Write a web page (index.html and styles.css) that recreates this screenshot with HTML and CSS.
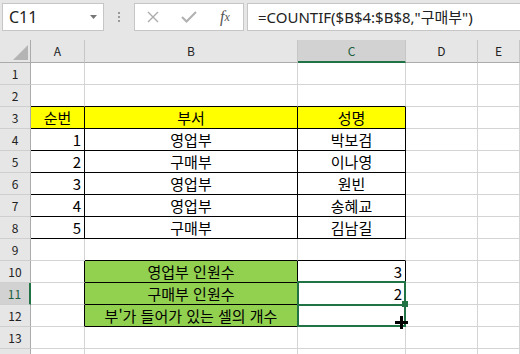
FILE: index.html
```html
<!DOCTYPE html>
<html lang="ko">
<head>
  <meta charset="UTF-8">
  <title>COUNTIF</title>
  <link rel="stylesheet" href="styles.css">
</head>
<body>
<div class="toolbar">
  <div class="namebox">
    <span>C11</span>
    <svg class="caret" width="7" height="4" viewBox="0 0 7 4"><path d="M0 0h7L3.5 4z" fill="#767676"/></svg>
  </div>
  <div class="grip"><i></i><i></i><i></i></div>
  <div class="fxbox">
    <span class="tool">
      <svg width="12" height="12" viewBox="0 0 12 12"><path d="M1 1l10 10M11 1L1 11" stroke="#ababab" stroke-width="1.4" fill="none"/></svg>
    </span>
    <span class="tool">
      <svg width="16" height="12" viewBox="0 0 16 12"><path d="M1 6l4.5 4.5L15 1" stroke="#b0b0b0" stroke-width="2" fill="none"/></svg>
    </span>
    <span class="tool fx">f<small>x</small></span>
  </div>
  <div class="formula">=COUNTIF($B$4:$B$8,"구매부")</div>
</div>

<div class="sheet">
  <!-- column headers -->
  <div class="hd corner"><svg width="15" height="15" viewBox="0 0 15 15"><path d="M15 0v15H0z" fill="#b4b4b4"/></svg></div>
  <div class="hd">A</div>
  <div class="hd">B</div>
  <div class="hd on">C</div>
  <div class="hd">D</div>
  <div class="hd">E</div>

  <div class="rn">1</div><div class="c"></div><div class="c"></div><div class="c"></div><div class="c"></div><div class="c"></div>
  <div class="rn">2</div><div class="c bb"></div><div class="c bb"></div><div class="c bb"></div><div class="c"></div><div class="c"></div>

  <div class="rn">3</div>
  <div class="c bb br yl ctr">순번</div>
  <div class="c bb br yl ctr">부서</div>
  <div class="c bb br yl ctr">성명</div>
  <div class="c"></div><div class="c"></div>

  <div class="rn">4</div>
  <div class="c bb br num">1</div>
  <div class="c bb br ctr">영업부</div>
  <div class="c bb br ctr">박보검</div>
  <div class="c"></div><div class="c"></div>

  <div class="rn">5</div>
  <div class="c bb br num">2</div>
  <div class="c bb br ctr">구매부</div>
  <div class="c bb br ctr">이나영</div>
  <div class="c"></div><div class="c"></div>

  <div class="rn">6</div>
  <div class="c bb br num">3</div>
  <div class="c bb br ctr">영업부</div>
  <div class="c bb br ctr">원빈</div>
  <div class="c"></div><div class="c"></div>

  <div class="rn">7</div>
  <div class="c bb br num">4</div>
  <div class="c bb br ctr">영업부</div>
  <div class="c bb br ctr">송혜교</div>
  <div class="c"></div><div class="c"></div>

  <div class="rn">8</div>
  <div class="c bb br num">5</div>
  <div class="c bb br ctr">구매부</div>
  <div class="c bb br ctr">김남길</div>
  <div class="c"></div><div class="c"></div>

  <div class="rn">9</div><div class="c"></div><div class="c bb"></div><div class="c bb"></div><div class="c"></div><div class="c"></div>

  <div class="rn">10</div>
  <div class="c br"></div>
  <div class="c bb br gr ctr">영업부 인원수</div>
  <div class="c bb br num">3</div>
  <div class="c"></div><div class="c"></div>

  <div class="rn on">11</div>
  <div class="c br"></div>
  <div class="c bb br gr ctr">구매부 인원수</div>
  <div class="c bb br num">2</div>
  <div class="c"></div><div class="c"></div>

  <div class="rn">12</div>
  <div class="c br"></div>
  <div class="c bb br gr ctr">부'가 들어가 있는 셀의 개수</div>
  <div class="c bb br"></div>
  <div class="c"></div><div class="c"></div>

  <div class="rn">13</div><div class="c"></div><div class="c"></div><div class="c"></div><div class="c"></div><div class="c"></div>
  <div class="rn"></div><div class="c"></div><div class="c"></div><div class="c"></div><div class="c"></div><div class="c"></div>

  <!-- selection with fill handle being dragged -->
  <div class="selbox"></div>
  <div class="selline"></div>
  <div class="handle"></div>
  <svg class="cursor" width="13" height="13" viewBox="0 0 13 13"><path d="M5 0h3v5h5v3H8v5H5V8H0V5h5z" fill="#000"/></svg>
</div>
</body>
</html>
```

FILE: styles.css
```css
body {
  margin: 0;
  width: 520px;
  height: 354px;
  overflow: hidden;
  background: #fff;
  font-family: "Noto Sans", "Noto Sans CJK KR", sans-serif;
  color: #000;
}

.toolbar {
  display: flex;
  align-items: flex-start;
  height: 40px;
  padding-top: 3px;
  box-sizing: border-box;
  background: #e6e6e6;
}

.namebox {
  margin-left: 2px;
  width: 102px;
  height: 28px;
  box-sizing: border-box;
  border: 1px solid #c6c6c6;
  background: #fff;
  display: flex;
  align-items: center;
  justify-content: space-between;
  padding: 0 6px 0 6px;
  font-size: 16px;
  color: #222;
}

.grip {
  width: 30px;
  height: 28px;
  display: flex;
  flex-direction: column;
  align-items: center;
  justify-content: center;
  gap: 2px;
}

.grip i {
  width: 2px;
  height: 2px;
  background: #9a9a9a;
}

.fxbox {
  width: 110px;
  height: 28px;
  box-sizing: border-box;
  border: 1px solid #c6c6c6;
  background: #fff;
  display: flex;
  align-items: center;
}

.tool {
  width: 36px;
  display: flex;
  justify-content: center;
  align-items: center;
}

.fx {
  font-family: "Liberation Serif", serif;
  font-style: italic;
  font-size: 16px;
  color: #555;
}

.fx small {
  font-size: 12px;
}

.formula {
  margin-left: 3px;
  flex: 1;
  height: 28px;
  box-sizing: border-box;
  border: 1px solid #c6c6c6;
  border-right: 0;
  background: #fff;
  padding-left: 10px;
  font-size: 15px;
  line-height: 26px;
  color: #222;
  white-space: nowrap;
}

/* worksheet */
.sheet {
  position: relative;
  display: grid;
  grid-template-columns: 31px 54px 213px 108px 72px 1fr;
  grid-template-rows: 23px repeat(14, 22px);
  font-family: "Noto Sans CJK KR", sans-serif;
}

.hd,
.rn,
.c {
  box-sizing: border-box;
  border-right: 1px solid #d4d4d4;
  border-bottom: 1px solid #d4d4d4;
  white-space: nowrap;
  overflow: hidden;
}

.hd {
  background: #e6e6e6;
  border-right-color: #c6c6c6;
  border-bottom-color: #ababab;
  text-align: center;
  font-size: 12px;
  line-height: 22px;
  color: #222;
}

.hd.on {
  background: #d2d2d2;
  border-bottom: 2px solid #217346;
  color: #1d5e40;
}

.corner {
  border-right-color: #ababab;
  display: flex;
  align-items: flex-end;
  justify-content: flex-end;
  padding: 0 2px 2px 0;
}

.rn {
  background: #e6e6e6;
  border-right-color: #ababab;
  border-bottom-color: #cfcfcf;
  text-align: center;
  font-size: 12px;
  line-height: 21px;
  color: #222;
}

.rn.on {
  background: #d2d2d2;
  border-right: 2px solid #217346;
  color: #1d5e40;
}

.c {
  padding: 0 3px;
  font-size: 15px;
  line-height: 21px;
}

.ctr { text-align: center; }
.num { text-align: right; }
.yl { background: #ffff00; }
.gr { background: #92d050; }
.bb { border-bottom-color: #000; }
.br { border-right-color: #000; }

.selbox {
  position: absolute;
  left: 297px;
  top: 241px;
  width: 109px;
  height: 46px;
  box-sizing: border-box;
  border: 2px solid #217346;
}

.selline {
  position: absolute;
  left: 299px;
  top: 264px;
  width: 104px;
  height: 2px;
  background: #217346;
}

.handle {
  position: absolute;
  left: 402px;
  top: 261px;
  width: 6px;
  height: 6px;
  background: #217346;
}

.cursor {
  position: absolute;
  left: 395px;
  top: 276px;
}
```
